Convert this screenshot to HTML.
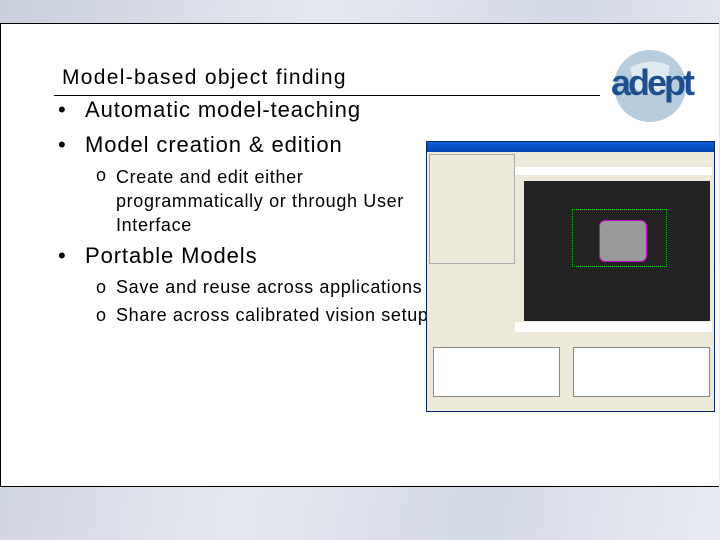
<!DOCTYPE html>
<html><head><style>
body{margin:0;width:720px;height:540px;overflow:hidden;background:linear-gradient(100deg,#c9cfdd 0%,#e4e8f0 40%,#d3d9e6 70%,#e8ebf2 100%);font-family:"Liberation Sans",sans-serif;position:relative}
.box{position:absolute;left:0;top:23px;width:718px;height:462px;background:#fff;border:1px solid #000;border-right:none}
.t{position:absolute;white-space:nowrap;color:#000}
.s{font-size:18px;letter-spacing:0.65px}
.b{font-size:22px;letter-spacing:0.9px}
.win{position:absolute;left:426px;top:141px;width:287px;height:269px;background:#ece9d8;border:1px solid #0a246a}
</style></head><body>
<div class="box"></div>
<div class="t" style="left:62px;top:66px;font-size:21px;letter-spacing:1.3px">Model-based object finding</div>
<div style="position:absolute;left:54px;top:95px;width:546px;height:1px;background:#000"></div>
<div class="t b" style="left:58px;top:97px">•</div><div class="t b" style="left:85px;top:97px">Automatic model-teaching</div>
<div class="t b" style="left:58px;top:132px">•</div><div class="t b" style="left:85px;top:132px">Model creation &amp; edition</div>
<div class="t s" style="left:96px;top:165px">o</div>
<div class="t s" style="left:116px;top:165px;line-height:24px">Create and edit either<br>programmatically or through User<br>Interface</div>
<div class="t b" style="left:58px;top:243px">•</div><div class="t b" style="left:85px;top:243px">Portable Models</div>
<div class="t s" style="left:96px;top:277px">o</div><div class="t s" style="left:116px;top:277px">Save and reuse across applications</div>
<div class="t s" style="left:96px;top:305px">o</div><div class="t s" style="left:116px;top:305px">Share across calibrated vision setup</div>
<svg style="position:absolute;left:610px;top:48px" width="86" height="76"><circle cx="40" cy="38" r="36" fill="#b7cddd"/><path d="M20 20 Q40 8 60 18 L55 40 Q40 50 25 40Z" fill="#dfe9f0"/></svg>
<div class="t" style="left:611px;top:62px;font-size:36px;font-weight:bold;color:#1d4f8f;letter-spacing:-3px">adept</div>
<div class="win">
<div style="height:10px;background:linear-gradient(#0a5fd8,#0842b0)"></div>
<div style="position:absolute;left:2px;top:12px;width:84px;height:108px;border:1px solid #aaa"></div>
<div style="position:absolute;left:88px;top:12px;width:197px;height:12px;background:#ece9d8"></div>
<div style="position:absolute;left:88px;top:25px;width:197px;height:8px;background:#fff"></div>
<div style="position:absolute;left:97px;top:39px;width:186px;height:140px;background:#222"></div>
<div style="position:absolute;left:172px;top:78px;width:46px;height:40px;background:#999;border:1px solid #c0c;border-radius:6px"></div>
<div style="position:absolute;left:145px;top:67px;width:93px;height:56px;border:1px dotted #0c0"></div>
<div style="position:absolute;left:88px;top:180px;width:197px;height:10px;background:#fff"></div>
<div style="position:absolute;left:6px;top:205px;width:125px;height:48px;background:#fff;border:1px solid #888"></div>
<div style="position:absolute;left:146px;top:205px;width:135px;height:48px;background:#fff;border:1px solid #888"></div>
</div>
</body></html>
